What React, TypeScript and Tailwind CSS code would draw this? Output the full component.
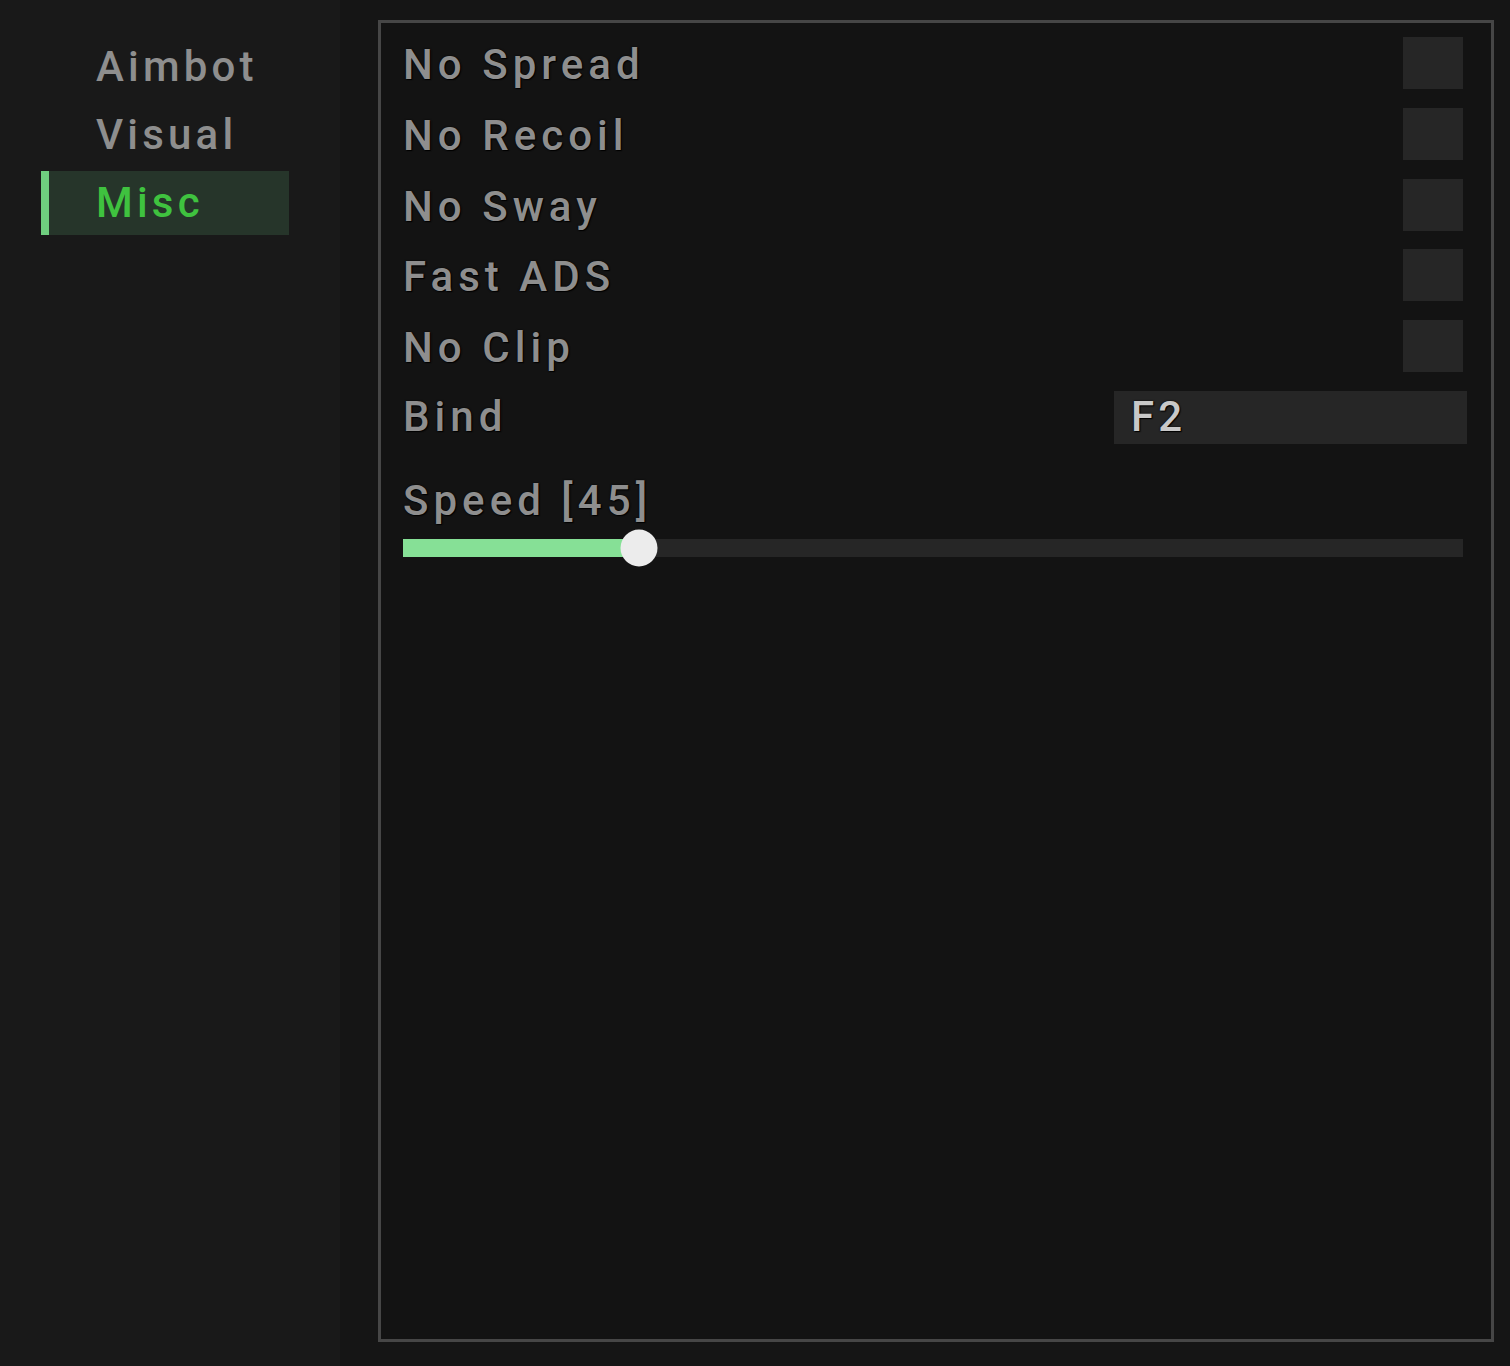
import { useState } from "react";

const tabs = ["Aimbot", "Visual", "Misc"];
const toggles = ["No Spread", "No Recoil", "No Sway", "Fast ADS", "No Clip"];

const font = { fontFamily: "Roboto, 'Liberation Sans', sans-serif" };

const App = () => {
  const [active, setActive] = useState("Misc");
  const [checked, setChecked] = useState<Record<string, boolean>>({});
  const speed = 45;

  return (
    <div
      className="flex h-[1366px] w-[1510px] bg-[#151515] text-[42px] font-medium tracking-[0.1em] text-[#8e8e8e] [text-shadow:0_0_2px_#000,1px_1px_1px_#000]"
      style={font}
    >
      <div className="flex w-[340px] shrink-0 flex-col gap-[4px] bg-[#191919] pl-[41px] pt-[35px]">
        {tabs.map((tab) => (
          <button
            key={tab}
            onClick={() => setActive(tab)}
            className={`flex h-[64px] w-[248px] items-center border-l-[8px] pl-[47px] text-left leading-none ${
              active === tab ? "border-[#6fcf7f] bg-[#26352a] text-[#3fc23f]" : "border-transparent"
            }`}
          >
            {tab}
          </button>
        ))}
      </div>

      <div className="flex-1 pb-[24px] pl-[38px] pr-[16px] pt-[20px] tracking-[0.12em]">
        <div className="flex h-full flex-col border-[3px] border-[#464646] bg-[#131313] pl-[22px] pr-[28px] pt-[14px]">
          <div className="flex flex-col gap-[18.75px]">
            {toggles.map((t) => (
              <div key={t} className="flex h-[52px] items-center justify-between">
                <span className="pt-[4px] leading-none">{t}</span>
                <button
                  onClick={() => setChecked({ ...checked, [t]: !checked[t] })}
                  className={`h-[52px] w-[60px] ${checked[t] ? "bg-[#6fcf7f]" : "bg-[#262626]"}`}
                />
              </div>
            ))}
            <div className="-mr-[4px] flex h-[53px] items-center justify-between">
              <span className="leading-none">Bind</span>
              <div className="flex h-[53px] w-[353px] items-center bg-[#262626] pl-[17px] leading-none tracking-[0.1em] text-[#c8c8c8]">
                F2
              </div>
            </div>
          </div>

          <div className="mt-[36px] leading-none">Speed [{speed}]</div>
          <div className="relative mt-[17px] h-[18px] w-full bg-[#262626]">
            <div className="h-full bg-[#86e096]" style={{ width: `${(236 / 1060) * 100}%` }} />
            <div
              className="absolute top-1/2 h-[37px] w-[37px] -translate-x-1/2 -translate-y-1/2 rounded-full bg-[#ececec]"
              style={{ left: `${(236 / 1060) * 100}%` }}
            />
          </div>
        </div>
      </div>
    </div>
  );
};

export default App;
